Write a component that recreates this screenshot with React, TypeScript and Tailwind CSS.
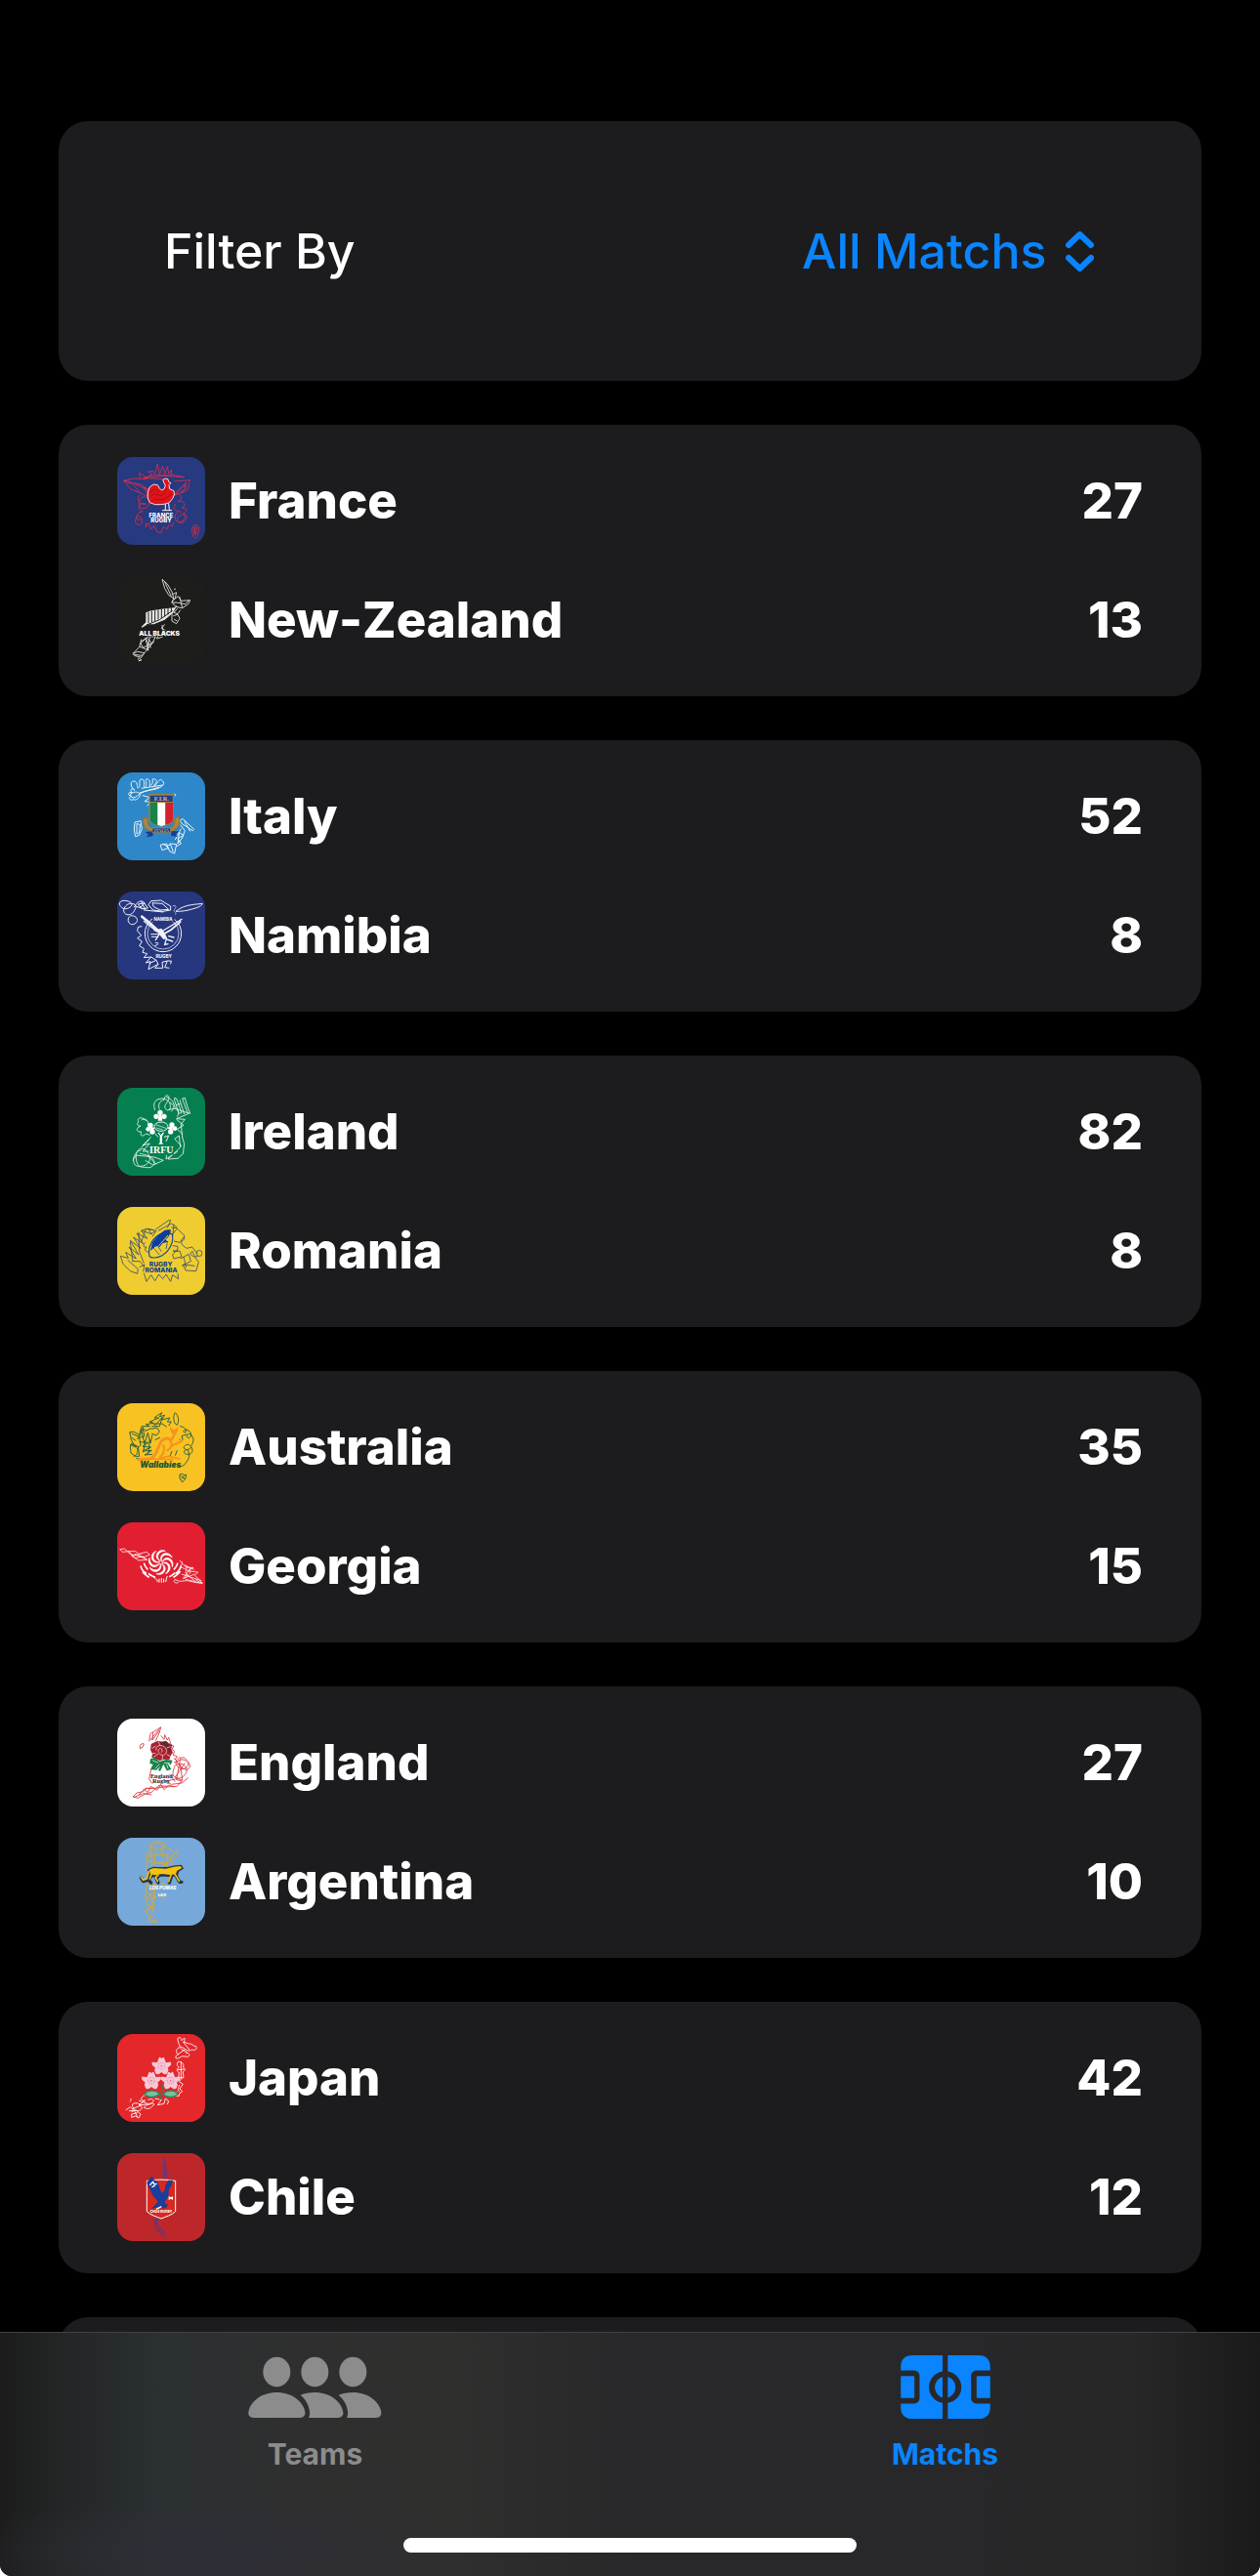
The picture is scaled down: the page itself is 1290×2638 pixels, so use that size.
import type { ReactNode } from "react";

type Team = { name: string; score: number; view: string; fill: string; art: ReactNode };

const sans = "Inter, 'Liberation Sans', sans-serif";
const serif = "'Liberation Serif', serif";

const franceArt = (
  <>
    <g fill="none" stroke="#d93049" strokeWidth="2.5" strokeLinejoin="round">
      <path d="M100 90 98 73l22 14 18-10-14-8 16-2 6 10 8-32 6 32 10-26 6 26 8-24 4 22 10-12-4 14 6-2M110 90l60-8 66 4-30-6-66 0-30 8 60 4" />
      <path d="M122 92 80 90 50 96l20 26 30 12-20-24-30-14 56 14 22 18-46-22M98 134l30 12-18-30 16 6M206 98l40-2 8-2-8 32-20 10 12-14 4-20-28 26-6 14 32-20-2-12-24 24" />
      <path d="M100 140c-14 12 0 34 18 28-26-6-28 18-10 24-18 0-26 22-12 26 10 0 8-14 0-12-14 2-14 26 0 26 12 0 14-18 8-20M96 170c0-30 30-30 32-8s-30 28-30 8M118 226l0 14 8-14 8 20 10-12 8 20 12 4 8-20 10 8 8-14 8 6 6-14" />
      <path d="M208 140c20-10 26 18 8 20 24-4 26 18 12 20 18-2 18 14 4 18 20 4 10 24 0 22 8 10-16 10-18-2s24-26 24-10-28 22-30 6 10-28 20-20M210 168c-10 10-8 22 8 22" />
      <path d="M268 233c10-4 16 10 12 22-2 10-6 18-10 18-6 0-10-14-10-24 0-8 4-14 8-16zM266 240l4 24 6-22-6-4-4 18" />
    </g>
    <path d="M178 168L178 186M188 166L190 186M168 188L198 188" fill="none" stroke="#fff" strokeWidth="3" />
    <path d="M170 94L178 90L186 92L188 100L195 104L189 110L191 122L204 128L206 138L200 152L190 164L178 168L164 170L146 170L130 164L124 150L124 132L130 116L142 108L154 110L160 120L166 126L174 122L178 112L174 104Z" fill="#e01319" stroke="#f6dde2" strokeWidth="3" strokeLinejoin="round" />
    <path d="M132 134C140 118 152 122 156 134M132 146C142 134 150 140 160 142S178 136 182 120M138 158C150 148 164 160 180 150S194 140 198 134" fill="none" stroke="#a50e16" strokeWidth="2.500" />
    <g fill="#fff" fontFamily={sans} fontWeight="800" fontSize="18" textAnchor="middle">
      <text x="165" y="210">FRANCE</text>
      <text x="165" y="226">RUGBY</text>
    </g>
  </>
);

const newZealandArt = (
  <>
    <g fill="none" stroke="#e8e8e8" strokeWidth="2.6" strokeLinejoin="round">
      <path d="M168 400l16 14 14 24 6 22-16-12-12-20zM176 408l20 44M204 432l6-4M200 446l12-6-4 18-10 12 10 4" />
      <path d="M200 464l18-12 8 14 28-2-6 12-18 12-20-4-12-12zM222 454l8 34M206 470l34 6 10-12M216 488l-12 14 12 4 8-12M212 480l-14 26v22l14 8 10-16-6-12-14 4M204 522l10 6" />
      <path d="M176 538l-10 12 14 8-12 10 12 6M160 560l-8 22 18-6M168 540l4 26" />
      <path d="M104 584l-6 24-20 20 14-6 22 4 22-28 12-22-24 0-22 20 8 14 26-14-14-16-18 10M116 580l18 30M130 578l-8 36 22-24M98 606l28 12-8-32M78 630l26 4 10-6M82 634l22 6 6-10M96 640l8 8-8 2M96 642c-4 6 2 12 8 4" />
    </g>
    <path d="M104 546L118 532L118 502L134 496L176 490L210 486L200 504L176 524L142 538L124 538L106 548Z" fill="#e8e8e8" />
    <path d="M126 500v34M136 496v36M146 494v34M156 493v30M166 491v28M176 490v24M186 488v20M196 486v14M120 540l40-16 40-28" fill="none" stroke="#1d1e1a" strokeWidth="3" />
    <rect x="96" y="556" width="134" height="18" fill="#1d1e1a" />
    <text x="97" y="573" fill="#fff" fontFamily={sans} fontWeight="900" fontSize="20">ALL BLACKS</text>
  </>
);

const italyArt = (
  <>
    <g fill="none" stroke="#e8f4fb" strokeWidth="3" strokeLinejoin="round">
      <path d="M82 116c-16 6-20-8-8-10-14-2-10-16 2-10-10-10 0-18 8-8-14-10-16-28-2-28s6 26 14 20-4-28 10-26 0 30 10 24-6-30 8-24-2 30 10 18-4-22 12-18-14 28 0 18 12-24 24-12-14 24-30 26-32 6-42 14-18 16-26 6 18-18 26-8-14 24-16 18" />
      <path d="M104 82l66-10M98 96l62-18M108 104l22 6-16 12 18 2-10 12M206 98l4 8" />
      <path d="M84 186l18-4 4 24-8 20-12 4-4-20zM90 190l10 4-2 24-8 4z" />
      <path d="M222 180l10-4 34 32-4 4-34-22zM236 182l18 32M224 194l14 18-8 22-14 18 4-32M214 214l20 12-18 10 10 16-14 8M226 206l-18 34" />
      <path d="M162 256l20-4 4 14-18 6zM180 260l18-8 14 2-6 28-14-6-8-14M192 250l10 26M170 252l20 14" />
    </g>
    <path d="M112 170c-8 20 4 42 28 46l-4-12c-10-4-14-14-12-28zM218 168c10 20-2 42-28 48l4-12c10-4 14-16 12-30z" fill="#aa8a42" stroke="#8f7738" strokeWidth="6" strokeDasharray="5 3" />
    <path d="M116 216l24-2v14l-20 4 6-8zM222 214l-26 0v14l20 2-6-8z" fill="#153d93" />
    <path d="M127 99h76v78c0 14-18 18-37 23-20-5-39-9-39-23z" fill="#9c8447" />
    <path d="M131 126h23v69c-14-4-23-8-23-19z" fill="#14854b" />
    <path d="M154 126h24v68l-12 4-12-4z" fill="#fff" />
    <path d="M178 126h23v50c0 11-11 14-23 18z" fill="#d5202d" />
    <rect x="131" y="104" width="69" height="19" fill="#19408f" />
    <text x="166" y="120" fill="#e0bd62" fontFamily={serif} fontWeight="700" fontSize="19" textAnchor="middle">F.I.R.</text>
    <path d="M138 204h56v14h-56z" fill="#143c88" stroke="#bb9a4d" strokeWidth="2" />
    <text x="166" y="217" fill="#d8b45c" fontFamily={serif} fontWeight="700" fontSize="13" textAnchor="middle">ITALIA</text>
  </>
);

const namibiaArt = (
  <>
    <g fill="none" stroke="#f1f3fb" strokeWidth="3" strokeLinejoin="round">
      <path d="M42 446c-10-10-4-20 12-19s26 10 18 18-24 10-30 1zM50 454c-2 18 20 22 30 8s10-24-4-26-22 8-26 18zM66 478c-8 12 4 28 18 20s6-22-4-24-10 0-14 4z" />
      <path d="M82 448c4-10 16-24 28-18l14 20-18 2-12-14 20-4-14 16M104 430l12 24-30-10M126 440l8-12 30-2 30 18 0 12-24 4-30-4zM138 434l30 2 20 18-26 2-20-10zM112 456l60 6" />
      <path d="M200 444c12-6 12 4 6 10s10 12 2 16" stroke="#b8a7cf" />
      <path d="M210 460c20-16 40-20 64-22l18-2c-4 10-22 14-36 18s-26 6-46 6z" />
      <path d="M106 506L94 508L92 520L104 534L92 542L106 552L98 566L112 574L108 586L122 590L112 602L134 600L118 618L132 614L126 638L156 622L150 610L128 620M134 600L150 610M156 622L146 634L170 634L168 616L184 612L176 632L190 634M184 612L196 612L194 622" />
      <circle cx="171" cy="528" r="56" />
      <circle cx="171" cy="528" r="48" strokeWidth="2" />
    </g>
    <path d="M136 468L206 468L206 492L190 488L171 482L152 488L140 496Z" fill="#27377e" />
    <text x="171" y="489" fill="#fff" fontFamily={sans} fontWeight="700" fontSize="13" textAnchor="middle">NAMIBIA</text>
    <g stroke="#f1f3fb" strokeLinecap="round" fill="none">
      <path d="M106 476L128 494L156 520" strokeWidth="8" />
      <path d="M112 490L134 508L158 526M228 484L196 504L166 522" strokeWidth="4" />
      <path d="M224 492L196 516L172 530" strokeWidth="5" />
      <path d="M144 518L172 528L182 546L200 552M158 532L148 548M180 548L176 562L186 560M188 536L204 540" strokeWidth="4" />
      <path d="M134 530h26M136 538h18M148 556l8 2M146 566l8-4" strokeWidth="3" />
    </g>
    <path d="M152 516L166 512L176 526L184 544L172 546L160 532Z" fill="#f1f3fb" />
    <text x="173" y="602" fill="#fff" fontFamily={sans} fontWeight="700" fontSize="14" textAnchor="middle">RUGBY</text>
  </>
);

const irelandArt = (
  <>
    <g fill="none" stroke="#e7f4ee" strokeWidth="2.6" strokeLinejoin="round">
      <path d="M146 96C138 74 146 62 166 60S200 78 190 96M160 94C154 80 160 66 174 64C176 44 192 48 188 62S166 84 184 96M180 54C206 66 212 84 196 100M192 72C206 82 226 100 214 116M184 96L204 90L240 102L254 106L246 86L238 58L230 60L246 104M206 58L212 60L228 104L220 106L206 66L206 58M222 64L236 108M210 80L224 76" />
      <path d="M120 130C104 110 88 122 96 132C88 136 92 146 102 144C84 152 90 164 104 162C98 176 110 178 118 168L130 172M104 126C120 118 128 130 124 144M250 106L212 122L238 124L226 138L230 180M212 124L234 142L214 154L232 170" />
      <path d="M134 178L108 204L130 198L108 222L134 222M104 210L128 186M230 178L236 200L232 230L216 244L186 246L224 210L220 174L206 184L228 206M184 214L180 246L216 222" />
      <path d="M104 218C76 224 72 266 94 268S140 256 126 230S86 210 88 242S104 270 122 272S150 258 140 246S112 232 98 228M78 250L88 234L144 240L172 250L140 264L116 250M124 236L150 262" />
    </g>
    <g fill="#fff">
      <circle cx="162" cy="103" r="8" /><circle cx="150" cy="115" r="8" /><circle cx="174" cy="115" r="8" /><path d="M159 106h6l4 22h-14z" />
      <circle cx="132" cy="142" r="8" /><circle cx="125" cy="154" r="7" /><circle cx="138" cy="162" r="8" /><path d="M130 146l18 4-14 10z" />
      <circle cx="198" cy="141" r="8" /><circle cx="207" cy="152" r="7" /><circle cx="194" cy="162" r="8" /><path d="M182 150l18-6v16z" />
      <path d="M161 196v-22l-7-10h4l6 8 6-8h4l-6 12v20l4 4h-16z" />
    </g>
    <ellipse cx="165" cy="146" rx="21" ry="14" fill="#0b8255" stroke="#e7f4ee" strokeWidth="3" />
    <path d="M148 140l34 12M150 150l20 6" stroke="#e7f4ee" strokeWidth="2" />
    <path d="M146 168l10 10M174 178l14-4-8 18" fill="none" stroke="#e7f4ee" strokeWidth="3" />
    <rect x="128" y="204" width="76" height="29" fill="#057f50" />
    <text x="166" y="229" fill="#fff" fontFamily={serif} fontSize="30" textAnchor="middle">IRFU</text>
  </>
);

const romaniaArt = (
  <>
    <g fill="none" stroke="#3b5070" strokeWidth="2.6" strokeLinejoin="round">
      <path d="M40 544L64 550L56 532L88 552L66 516L96 540L70 496L102 520L80 486L110 506L90 474L122 490L104 466L136 476L124 460L148 466L134 476M40 544L48 568L70 590L92 598L94 584L62 556M70 500L78 560M96 470L98 530L112 566M118 462L104 500M104 466L120 460L142 464M76 560L100 560L112 576" />
      <path d="M148 462L188 434L194 434L184 458M156 466L196 444L214 456M196 456L212 458L236 480L236 492L222 502L204 498M204 446L200 486M214 460L188 490M150 466L138 484" />
      <path d="M236 486C220 494 226 512 244 520L260 516L276 536M278 544C266 550 264 536 262 530C250 532 256 544 268 546L280 562L272 590L240 588L232 570L268 574M202 530L222 528L228 546L204 552L200 540L212 526" />
      <rect x="274" y="527" width="16" height="17" rx="6" />
      <path d="M224 552L250 538L256 560L228 574M234 546L242 580M112 596L120 622L134 602L146 620L158 600L170 614L180 600L194 622L200 602L218 614L216 598M98 578l16-8-4 22M116 502c-8 8-6 16 4 14-8 8-2 18 8 14M200 512l16 2-2 16-12-4" />
    </g>
    <path d="M129 544C122 514 140 484 172 472L198 476C206 500 190 528 168 542C152 550 134 552 129 544Z" fill="#efcd30" stroke="#174a95" strokeWidth="3.500" />
    <path d="M132 528L138 502L156 480L176 464L194 462L194 472L188 484L178 494L188 500L170 504L160 516L148 514Z" fill="#0c3da0" />
    <path d="M132 530C148 524 164 506 186 480" fill="none" stroke="#efcd30" strokeWidth="3" />
    <path d="M142 520l18 20M156 516l10 14M184 502l-4 20" fill="none" stroke="#3b5070" strokeWidth="2.500" />
    <g fill="#123f91" fontFamily={sans} fontWeight="800" textAnchor="middle" fontSize="20">
      <text x="164" y="576">RUGBY</text>
      <text x="165" y="594">ROMANIA</text>
    </g>
  </>
);

const australiaArt = (
  <>
    <g fill="none" stroke="#2d6440" strokeWidth="3" strokeLinejoin="round">
      <path d="M154 58L168 50L160 62L176 58L166 72L192 66L184 78L196 78L188 90M154 58L144 66L158 66L130 78L142 82L118 86L130 92L106 92L116 106L136 98M130 78L148 88L168 64L160 92L136 92M104 94L98 118L80 108L68 110L72 126L88 136M74 114L98 124L108 98L114 122L90 130" />
      <path d="M70 128L86 156L70 148L72 174L86 184L98 184L94 154L72 144M74 148C98 148 98 182 80 184M96 120L102 150L94 158M104 104L114 146L124 112L132 144L138 118M98 140L126 142L108 154L134 156L108 168L136 166L114 180L138 178M116 136L110 172M130 132L126 176M136 100L152 96L160 108L150 120L136 114M144 84L168 84L182 94M146 134L162 126M88 190l20 4" />
      <path d="M208 50C202 58 202 74 208 84L214 88C220 80 220 60 208 50ZM222 92C238 92 246 106 240 110C232 112 230 104 240 102C258 104 262 124 250 128C238 126 244 114 254 116C268 126 266 140 256 154C248 142 238 150 234 156C236 166 250 166 258 156C266 170 256 180 246 178C232 178 232 164 246 164C254 178 252 190 242 202C238 212 230 214 218 218M232 134L228 122L244 116M214 166L208 182M198 168l-6 16" />
      <path d="M222 240l8-2 6 4 6-2-2 12-10 12-8-12zM226 244l12 10M236 244l-8 10" />
    </g>
    <g fill="none" stroke="#f5941d" strokeLinecap="round" strokeLinejoin="round">
      <path d="M96 194L130 192C152 184 152 160 164 140C172 128 186 126 194 134" strokeWidth="9" />
      <path d="M172 150C178 166 172 176 160 190M192 134C202 146 196 160 184 166M196 152L228 138L222 132" strokeWidth="7" />
      <path d="M194 98L204 106L216 98L210 114L206 118L198 110Z" fill="#f5941d" strokeWidth="4" />
      <path d="M204 120L198 132" strokeWidth="8" />
      <path d="M164 190L188 184L222 192M130 192L200 194" strokeWidth="5" />
    </g>
    <text x="163" y="219" fill="#1b5636" fontFamily={sans} fontWeight="900" fontStyle="italic" fontSize="25" textAnchor="middle">Wallabies</text>
  </>
);

const blade = "M163 506C150 502 146 488 156 478C162 473 170 471 178 475C168 475 160 479 156 486C153 494 156 501 163 506Z";
const bladeAngles = [0, 45, 90, 135, 180, 225, 270, 315];

const georgiaArt = (
  <>
    <g fill="none" stroke="#fbe4e6" strokeWidth="2.6" strokeLinejoin="round">
      <path d="M38 470l14-2 10 8 24 0 10 8 24-6 10 8-18 8-20-6-18-2-8-10-20 2zM62 478l24 18 24-4 12 10-26 2-22-14 30-6M84 484l38 18" />
      <path d="M222 504L242 526L264 526L248 536L278 540L268 550L284 564L292 574L272 572L246 566L222 568L206 562M230 508L226 524L256 540L236 560M244 520L240 544L272 570M256 526L232 560L268 546M228 546L288 566M240 562L290 574M236 518L266 532M218 572C208 576 198 568 210 562M270 562l20 12" />
    </g>
    <g fill="#fff" stroke="#fff" strokeWidth="2">
      {bladeAngles.map((a) => (
        <path key={a} d={blade} transform={`rotate(${a} 164 510)`} />
      ))}
    </g>
    <g fill="none" stroke="#fff" strokeWidth="5">
      <path d="M102 520c2 10 10 20 18 24M108 540c8 8 12 10 20 16M126 544c6 6 12 8 20 12M208 542c-6 6-10 8-18 12M226 520c-2 10-8 18-16 24M224 538c-8 10-12 12-22 18M112 512c2 8 6 14 12 20M216 512c-2 8-6 14-12 20" />
      <path d="M144 552l4 10M184 552l-4 10M152 562l2 8M159 560v12M166 558v14M173 560v12M181 562l-2 8" strokeWidth="3" />
    </g>
  </>
);

const englandArt = (
  <>
    <g fill="none" stroke="#d93740" strokeWidth="2.6" strokeLinejoin="round">
      <path d="M100 112l8-6 4 2-4 10-8 4zM128 100L132 76L152 64L164 56L160 72L148 98M132 96L160 60M140 72L138 96L160 66M164 82l10 12 2-14 8 16 4-8 6 18-8 4 18 4-6 10 8 6-4 12 12 4-6 10 8 8-12 0" />
      <path d="M204 152L212 158L220 150L236 150L250 164L254 178L244 188L226 180L212 160M216 160C236 146 260 170 240 182S200 162 216 160ZM206 176C226 158 250 178 242 196S212 218 204 208S206 182 206 176M224 152L212 218M238 166L208 210L230 220L224 170" />
      <path d="M248 212L228 228L196 232L178 222L208 216L228 222L214 238L174 240L144 244L122 244L110 254L90 258L78 270L94 274L118 260L136 256L156 236L186 238M110 246L124 256L134 238L152 250L164 232L174 248L188 234L206 240M96 264L116 244L136 244M80 272L110 260L136 264M134 186L128 216L138 230M190 200L208 224" />
    </g>
    <path d="M134 108L146 102L154 98L166 101L180 98L188 106L199 110L196 122L201 134L194 144L190 156L174 155L160 159L148 153L136 150L138 138L132 126Z" fill="#a8202f" />
    <path d="M158 101L182 101L196 118L190 136L180 118L158 110Z" fill="#69272d" />
    <path d="M150 128C146 114 162 108 174 116S182 140 172 142S152 132 158 124S172 126 166 134M136 122l12-8M142 148l14-10M168 156l2-12M194 146l-12-6M194 116l-12 4M156 100l6 12M134 138l14-2" fill="none" stroke="#f1c5ca" strokeWidth="2.500" />
    <path d="M132 154L146 150L160 162L180 156L200 158L194 172L184 166L196 186L182 190L172 170L162 192L156 188L162 176L150 188L132 186L140 170L130 168Z" fill="#168349" />
    <path d="M138 158l18 8M174 166l18 0M146 184l14-14M182 170l4 14" stroke="#d5eadc" strokeWidth="2.500" />
    <g fill="#27222a" fontFamily={serif} fontWeight="700" fontSize="19" textAnchor="middle">
      <text x="166" y="213">England</text>
      <text x="165" y="229">Rugby</text>
    </g>
  </>
);

const argentinaArt = (
  <>
    <g fill="none" stroke="#d9a92f" strokeWidth="2.800" strokeLinejoin="round">
      <path d="M134 416C144 404 172 402 180 420L160 430L132 424ZM136 424C136 410 170 408 172 424M130 424L130 458L118 464L124 436L136 424M136 428L136 488M148 434L144 474L184 478L184 442M122 452L192 446M164 430C168 450 184 464 200 452S190 422 174 428S170 468 192 476M216 434L212 454L190 468L172 478M216 434L192 458L202 480M118 468L178 474L188 486M120 470L120 496M128 466L152 488M160 468L188 488" />
      <path d="M124 530L120 556L116 576L122 602L134 606L120 622L128 638L128 652L152 656L144 644L134 634L142 614L128 610L146 600L132 590L148 578L128 574L148 558L130 554L152 532M116 560L150 580L120 584M120 598L146 612M118 546L148 538L140 608M112 620l24-6M128 636l10 14 14 4M154 572l16 12 8-6M160 534l24 10M170 532l14 16" />
    </g>
    <g fill="none" strokeLinecap="round" strokeLinejoin="round">
      <path d="M103 519L110 530L124 526L130 500L150 492L204 490M140 505L126 526L134 534M158 512L150 522L156 534M198 510L190 534M208 508L222 532L228 532" stroke="#25364c" strokeWidth="10" />
      <path d="M126 494L140 488L180 490L204 484L226 482L231 490L218 498L214 510L196 514L170 512L148 516L132 514Z" fill="#25364c" stroke="#25364c" strokeWidth="5" />
      <path d="M103 517L110 526L121 522L127 500M136 505L130 522M156 510L148 518L154 530M196 508L188 530M206 506L220 528" stroke="#f5c20d" strokeWidth="5" />
      <path d="M128 494L142 489L180 491L204 485L224 483L229 489L214 497L210 508L194 510L168 507L146 511L132 507Z" fill="#f5c20d" />
    </g>
    <text x="170" y="556" fill="#fff" fontFamily={sans} fontWeight="800" fontStyle="italic" fontSize="14" textAnchor="middle">LOS PUMAS</text>
    <text x="168" y="576" fill="#fff" fontFamily={sans} fontWeight="700" fontSize="12" textAnchor="middle">UAR</text>
  </>
);

const Blossom = ({ x, y }: { x: number; y: number }) => (
  <g transform={`translate(${x} ${y})`}>
    <path d="M-6-26L0-22L6-26L11-14L12-9L28-11L28-3L18 5L20 14L16 24L8 24L0 18L-8 24L-16 24L-20 14L-18 5L-28-3L-28-11L-12-9L-11-14Z" fill="#f6c8d7" stroke="#fbe5ec" strokeWidth="2" strokeLinejoin="round" />
    <circle r="10" fill="none" stroke="#e27c96" strokeWidth="3" strokeDasharray="3 3" />
    <circle r="3" fill="#e27c96" />
  </g>
);

const japanArt = (
  <>
    <g fill="none" stroke="#fff" strokeWidth="2.600" strokeLinejoin="round">
      <path d="M216 38C220 30 228 38 228 44L236 36C240 40 236 46 234 48L250 54C262 52 262 62 272 62C278 70 268 76 260 72C250 78 242 74 236 68L222 62C220 52 216 50 216 38ZM232 48L252 72M226 66C210 62 208 84 218 86C206 90 208 104 218 98L230 92L248 94C256 88 248 80 240 82M214 88L240 70M226 70L244 80" />
      <path d="M218 108C212 116 214 124 220 126C212 130 212 140 220 142L218 158L234 158L232 140C240 136 238 128 232 126C238 118 230 110 218 108ZM216 134l20-2M226 108v50M230 158L220 170L232 178L222 192L230 200L220 208L220 214L206 214M222 180c-8 10-4 18 0 22M214 200l-8 12" />
      <path d="M70 224c4-4 4 4-2 8M116 212C100 216 100 232 116 228L96 242L124 240M124 226C148 218 146 236 124 242M112 250C122 236 138 234 144 240C134 250 128 258 112 250ZM146 222L166 226L154 242L174 238L178 222L188 230L184 240M96 228l28 10" />
      <path d="M76 240C90 230 104 240 106 252C98 266 78 262 76 240ZM56 258L70 248L82 260L66 260M76 254l26-10M74 262L88 258L102 270L96 282L86 276L74 280L74 270L92 266M84 262l8 16" />
    </g>
    <Blossom x={166} y={122} />
    <Blossom x={135} y={167} />
    <Blossom x={194} y={167} />
    <path d="M168 206c-14 4-22 6-26 4M170 180v20" fill="none" stroke="#b54a44" strokeWidth="4" />
    <path d="M114 208c12-14 36-12 46 0-12 12-36 12-46 0zM172 208c10-12 34-14 44 0-10 12-34 12-44 0z" fill="#74c3a0" stroke="#258b66" strokeWidth="4" />
    <path d="M167 174v32l-6 20" fill="none" stroke="#4c7044" strokeWidth="5" />
  </>
);

const chileArt = (
  <>
    <g fill="none" stroke="#4c3d94" strokeWidth="2.600" strokeLinejoin="round">
      <path d="M174 402L170 414L178 422L168 430L182 434L170 442L186 446L168 454L188 458L168 466L182 470M176 404l2 36M170 430l14 32M184 440l-16 28" />
      <path d="M146 590C136 598 150 602 158 592C142 598 138 610 150 608C140 614 144 624 154 618C146 628 154 632 162 628C156 638 166 642 170 636L174 648C182 644 178 630 168 634C176 626 168 620 160 624C166 612 156 610 152 614C158 606 150 602 146 606C152 598 152 594 148 588M160 586L152 604M152 620l10 14" />
    </g>
    <path d="M121 475c28-5 60-5 88 0v94c-12 12-30 16-44 22-14-6-32-10-44-22z" fill="#d6291f" stroke="#fff" strokeWidth="3" />
    <path d="M126 474L136 462L142 472L154 480L160 500L166 514L176 506L180 486L188 474L200 474L196 488L188 500L186 524L178 534L174 544L184 548L180 558L168 558L156 554L136 560L150 546L156 538L140 520L130 498L122 482Z" fill="#173f9b" stroke="#22398c" strokeWidth="2" />
    <path d="M130 488L140 478L144 486L152 484M136 494L146 490M166 554L150 562" fill="none" stroke="#fff" strokeWidth="4" />
    <path d="M188 522l7 4 6-4v12l-6-4-7 4z" fill="#fff" />
    <text x="165" y="573" fill="#fff" fontFamily={sans} fontWeight="800" fontSize="10" textAnchor="middle">CHILE RUGBY</text>
  </>
);

const matches: [Team, Team][] = [
  [
    { name: "France", score: 27, view: "30 24 270 270", fill: "#27397f", art: franceArt },
    { name: "New-Zealand", score: 13, view: "30 390 270 270", fill: "#1d1e1c", art: newZealandArt },
  ],
  [
    { name: "Italy", score: 52, view: "30 33 270 270", fill: "#2d87c8", art: italyArt },
    { name: "Namibia", score: 8, view: "30 399 270 270", fill: "#27377e", art: namibiaArt },
  ],
  [
    { name: "Ireland", score: 82, view: "30 27 270 270", fill: "#057f50", art: irelandArt },
    { name: "Romania", score: 8, view: "30 393 270 270", fill: "#efcd30", art: romaniaArt },
  ],
  [
    { name: "Australia", score: 35, view: "30 21 270 270", fill: "#f9c223", art: australiaArt },
    { name: "Georgia", score: 15, view: "30 387 270 270", fill: "#e21f30", art: georgiaArt },
  ],
  [
    { name: "England", score: 27, view: "30 30 270 270", fill: "#ffffff", art: englandArt },
    { name: "Argentina", score: 10, view: "30 396 270 270", fill: "#76a8da", art: argentinaArt },
  ],
  [
    { name: "Japan", score: 42, view: "30 24 270 270", fill: "#e4272b", art: japanArt },
    { name: "Chile", score: 12, view: "30 390 270 270", fill: "#be2729", art: chileArt },
  ],
];

function TeamRow({ team }: { team: Team }) {
  return (
    <li className="flex items-center text-[51px] leading-[60px] font-extrabold text-white">
      <svg
        className="size-[90px] shrink-0 rounded-2xl"
        viewBox={team.view}
        style={{ backgroundColor: team.fill }}
        aria-hidden="true"
      >
        {team.art}
      </svg>
      <span className="ml-6 flex-1">{team.name}</span>
      <span>{team.score}</span>
    </li>
  );
}

function TeamsIcon() {
  return (
    <svg className="h-[65px] w-[137px]" viewBox="38 66 411 195" fill="#8c8c8d" aria-hidden="true">
      <ellipse cx="126" cy="117" rx="42" ry="46" />
      <ellipse cx="243" cy="117" rx="42" ry="46" />
      <ellipse cx="360" cy="117" rx="42" ry="46" />
      <path d="M55 258c-11 0-17-7-16-17 4-32 40-61 87-61s83 29 87 61c1 10-5 17-16 17z" />
      <path d="M199 188c12-5 27-8 44-8 47 0 83 29 87 61 1 10-5 17-16 17h-90c3-6 4-12 3-20-3-20-12-37-28-50z" />
      <path d="M316 188c12-5 27-8 44-8 47 0 83 29 87 61 1 10-5 17-16 17h-90c3-6 4-12 3-20-3-20-12-37-28-50z" />
    </svg>
  );
}

function PitchIcon() {
  return (
    <svg className="h-[65px] w-[92px]" viewBox="63 66 276 196" fill="#0a84ff" aria-hidden="true">
      <path d="M98 66h94v50a49 49 0 0 0 0 97v49H98c-22 0-35-13-35-35v-12h40c11 0 18-7 18-18v-66c0-11-7-18-18-18H63v-12c0-22 13-35 35-35z" />
      <path d="M304 66h-96v50a49 49 0 0 1 0 97v49h96c22 0 35-13 35-35v-12h-41c-11 0-18-7-18-18v-66c0-11 7-18 18-18h41v-12c0-22-13-35-35-35z" />
      <path d="M63 130h40q2 0 2 2v64q0 2-2 2H63zM339 130h-40q-2 0-2 2v64q0 2 2 2h40z" />
      <path d="M192 132v65a34 34 0 0 1 0-65zM208 132v65a34 34 0 0 0 0-65z" />
    </svg>
  );
}

export default function App() {
  return (
    <div className="h-screen bg-white font-[Inter,'Liberation_Sans',sans-serif]">
      <div className="flex h-full flex-col overflow-hidden rounded-b-xl bg-black">
        <main className="flex min-h-0 flex-1 flex-col gap-[45px] overflow-hidden px-[60px] pt-[124px]">
          <section className="flex shrink-0 items-center justify-between rounded-[30px] bg-[#1c1c1e] py-[103px] pr-[110px] pl-[108px] text-[50px] leading-[60px] font-medium">
            <label htmlFor="match-filter" className="text-white">
              Filter By
            </label>
            <div className="relative text-[#0a84ff]">
              <select id="match-filter" className="cursor-pointer appearance-none bg-transparent pr-[48px]">
                <option>All Matchs</option>
              </select>
              <svg
                className="pointer-events-none absolute inset-y-0 right-0 my-auto h-[41px] w-[29px]"
                viewBox="0 0 29 41"
                fill="none"
                stroke="currentColor"
                strokeWidth="6"
                strokeLinecap="round"
                strokeLinejoin="round"
                aria-hidden="true"
              >
                <path d="M3 14 14.500 3 26 14M3 27l11.500 11L26 27" />
              </svg>
            </div>
          </section>

          {matches.map((pair) => (
            <ul
              key={pair[0].name}
              className="flex shrink-0 flex-col gap-8 rounded-[30px] bg-[#1c1c1e] px-[60px] py-[33px]"
            >
              {pair.map((team) => (
                <TeamRow key={team.name} team={team} />
              ))}
            </ul>
          ))}
          <div className="h-[278px] shrink-0 rounded-[30px] bg-[#1c1c1e]" />
        </main>

        <nav className="shrink-0 border-t border-[#414143] bg-[radial-gradient(ellipse_at_17%_90%,#2e2e37_0%,transparent_18%),linear-gradient(90deg,#1c1c1c_0%,#232626_5%,#2b3032_13%,#2f2f2f_24%,#2f2f2e_36%,#28282a_50%,#28282a_78%,#272727_90%,#1a1a1b_100%)] pt-[23px] pb-6">
          <div className="grid grid-cols-2 text-[30px] leading-9 font-bold">
            <button type="button" className="flex flex-col items-center gap-[18px] text-[#8c8c8d]">
              <TeamsIcon />
              Teams
            </button>
            <button type="button" className="flex flex-col items-center gap-[18px] text-[#0a84ff]" aria-current="page">
              <PitchIcon />
              Matchs
            </button>
          </div>
          <div className="mx-auto mt-[68px] h-[15px] w-[36%] rounded-full bg-white" />
        </nav>
      </div>
    </div>
  );
}
